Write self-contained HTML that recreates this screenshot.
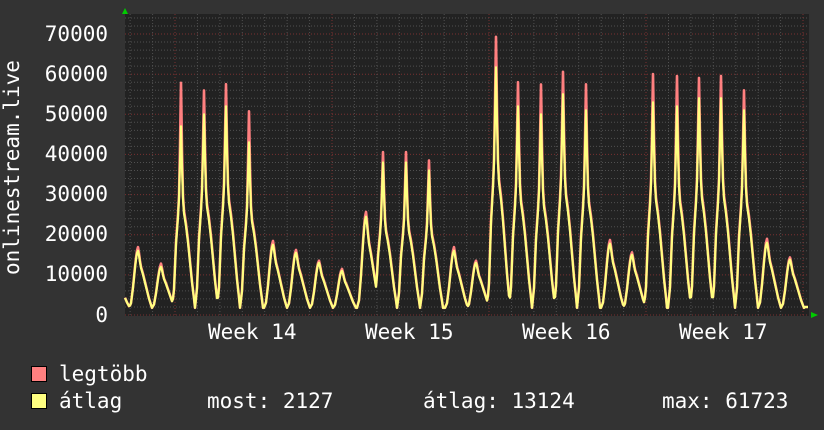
<!DOCTYPE html>
<html><head><meta charset="utf-8">
<style>
html,body{margin:0;padding:0;background:#333333;}
body{width:824px;height:430px;overflow:hidden;position:relative;font-family:"DejaVu Sans Mono","Liberation Mono",monospace;color:#fff;}
.t{position:absolute;font-size:21px;line-height:1;white-space:pre;}
.yl{position:absolute;right:716px;font-size:21px;line-height:1;text-align:right;}
.box{position:absolute;width:14px;height:14px;border:1px solid #000;}
</style></head><body>
<svg id="g" width="824" height="430" style="position:absolute;left:0;top:0">
<rect x="125" y="14" width="684" height="302" fill="#222222"/>
<g id="grid"></g>
<g id="lines"></g>
<path d="M122 14 L125 8 L128 14 Z" fill="#00cc00"/>
<path d="M811 312 L818 315 L811 318 Z" fill="#00cc00"/>
</svg>
<div class="yl" style="top:24px">70000</div>
<div class="yl" style="top:64px">60000</div>
<div class="yl" style="top:104px">50000</div>
<div class="yl" style="top:144px">40000</div>
<div class="yl" style="top:184px">30000</div>
<div class="yl" style="top:224px">20000</div>
<div class="yl" style="top:264px">10000</div>
<div class="yl" style="top:305px">0</div>
<div class="t" style="left:2px;top:275px;transform-origin:0 0;transform:rotate(-90deg)">onlinestream.live</div>
<div class="t" style="left:208px;top:322px">Week 14</div>
<div class="t" style="left:365px;top:322px">Week 15</div>
<div class="t" style="left:522px;top:322px">Week 16</div>
<div class="t" style="left:679px;top:322px">Week 17</div>
<div class="box" style="left:31px;top:366px;background:#ff8080"></div>
<div class="box" style="left:31px;top:393px;background:#ffff80"></div>
<div class="t" style="left:59px;top:364px">legtöbb</div>
<div class="t" style="left:59px;top:391px">átlag</div>
<div class="t" style="left:207px;top:391px">most: 2127</div>
<div class="t" style="left:423px;top:391px">átlag: 13124</div>
<div class="t" style="left:662px;top:391px">max: 61723</div>
<script>
function Y(v){return 315-v*0.004014;}
var grid=document.getElementById('grid'),s='';
for(var v=0;v<=74000;v+=2000){var y=Y(v).toFixed(1);var maj=v%10000==0;
s+='<line x1="125" x2="809" y1="'+y+'" y2="'+y+'" stroke="'+(maj?'#7a3030':'#505050')+'" stroke-width="1" stroke-dasharray="1,2"/>';}
for(var k=-3;k<40;k++){var x=175+k*22.43;if(x<126||x>808)continue;var maj=(k%7==0);
s+='<line x1="'+x.toFixed(1)+'" x2="'+x.toFixed(1)+'" y1="14" y2="315" stroke="'+(maj?'#7a3030':'#505050')+'" stroke-width="1" stroke-dasharray="1,2"/>';}
grid.innerHTML=s;
var P=[[116,10500,10000],[138,16500,16000],[161,12500,12000],[181,56500,47000],[204,54500,50000],[226,56000,52000],[249,49500,43000],[273,18000,17500],[296,15800,15500],[319,13200,13000],[342,11200,11000],[366,25000,24500],[383,39500,38000],[406,39500,38000],[429,37500,36000],[454,16500,16000],[476,13200,13000],[496,67500,61700],[518,56500,52000],[541,56000,50000],[563,59000,55000],[586,56000,51000],[610,18200,17800],[632,15200,15000],[653,58500,53000],[677,58000,52000],[699,57500,54000],[721,58000,54000],[744,54500,51000],[767,18500,18000],[790,14000,13800]];
var small=[[-9,0],[-7,0.08],[-5,0.35],[-3,0.7],[-2,0.85],[-1,0.96],[0,1],[1,0.92],[2,0.8],[3,0.7],[5,0.58],[7,0.44],[9,0.3],[11,0.16],[13,0.05],[14,0]];
var big=[[-9,0],[-7,0.1],[-5,0.35],[-3,0.5],[-2,0.6],[-1,0.8],[0,1],[1,0.78],[2,0.6],[3,0.52],[5,0.45],[7,0.36],[9,0.25],[11,0.14],[13,0.05],[14,0]];
function val(x,idx){var tot=1800;for(var i=0;i<P.length;i++){var d=x-P[i][0];if(d<-9||d>14)continue;
var prof=P[i][2]>30000?big:small;
for(var j=0;j<prof.length-1;j++){if(d>=prof[j][0]&&d<=prof[j+1][0]){var f=prof[j][1]+(prof[j+1][1]-prof[j][1])*(d-prof[j][0])/(prof[j+1][0]-prof[j][0]);
var pk=P[i][2]-1800;var v=pk*f;if(idx==1){var e=Math.max(0,1-Math.abs(d)/1.5);v=v*1.03+(P[i][1]-P[i][2])*e;}
tot=Math.max(tot,1800+v);break;}}}return tot;}
function path(idx){var d='';for(var x=125;x<=808;x+=1){var v=val(x,idx);if(x>=805)v=2000;d+=(x==125?'M':'L')+x+' '+Y(v).toFixed(1)+' ';}return d;}
document.getElementById('lines').innerHTML='<path d="'+path(1)+'" fill="none" stroke="#ff8080" stroke-width="2.6" stroke-linejoin="round"/><path d="'+path(2)+'" fill="none" stroke="#ffff80" stroke-width="2.2" stroke-linejoin="round"/>';
</script>
</body></html>
